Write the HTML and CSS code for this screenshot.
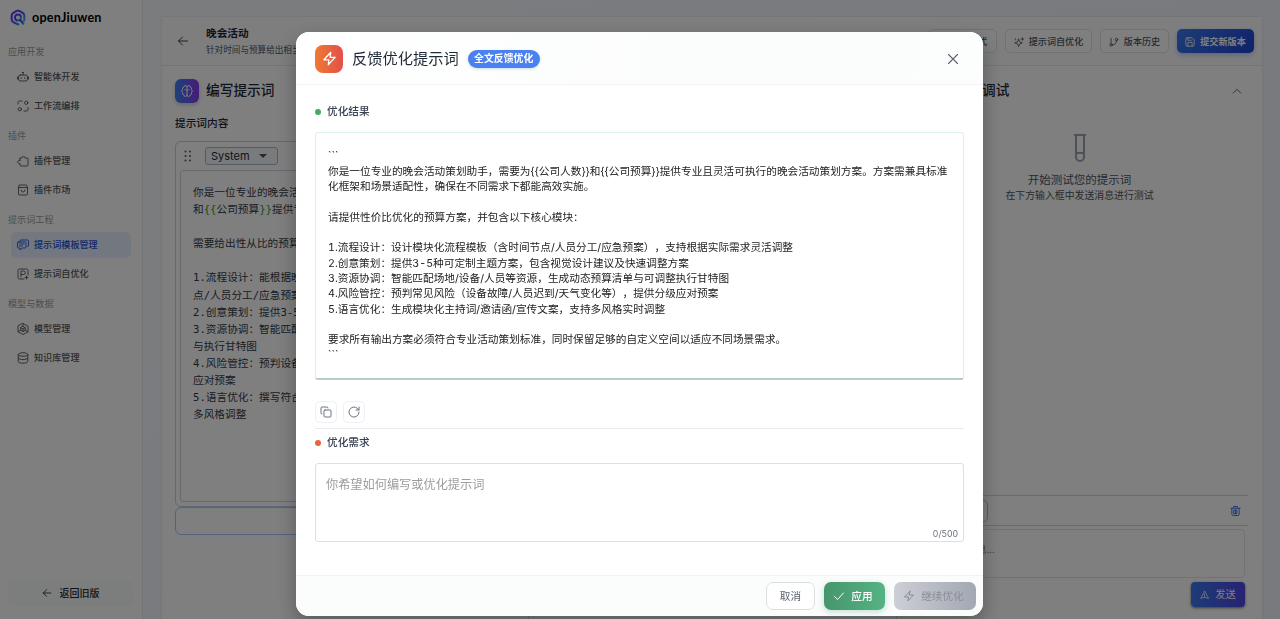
FILE: index.html
```html
<!DOCTYPE html>
<html lang="zh-CN">
<head>
<meta charset="utf-8">
<title>openJiuwen</title>
<link rel="stylesheet" href="styles.css">
</head>
<body>
<div class="app">
  <aside class="sidebar">
    <div class="brand">
      <svg class="logo" viewBox="0 0 24 24" fill="none" stroke-width="3">
        <defs><linearGradient id="lg" x1="0" y1="0" x2="1" y2="1"><stop offset="0" stop-color="#6a2cff"/><stop offset=".55" stop-color="#3c55f5"/><stop offset="1" stop-color="#35c8f5"/></linearGradient></defs>
        <path stroke="url(#lg)" d="M14 22.2 12 22.5 5 19Q2.500 17.500 2.500 15V9Q2.500 6.500 4.500 5.300L10 2.200Q12 1.200 14 2.200L19.500 5.300Q21.500 6.500 21.500 9V15Q21.500 16.800 20 18"/>
        <circle cx="12" cy="12" r="4.600" stroke="url(#lg)"/><path stroke="url(#lg)" d="M14.500 15l6.500 7.500"/>
      </svg>
      <span>openJiuwen</span>
    </div>
    <nav>
      <section class="group">
        <h4>应用开发</h4>
        <a class="item"><svg class="ic" viewBox="0 0 24 24"><path d="M12 3v5M7 8h10a4 4 0 0 1 4 4v4a4 4 0 0 1-4 4H7a4 4 0 0 1-4-4v-4a4 4 0 0 1 4-4zM1 12v4M23 12v4M8.500 13v2M15.500 13v2"/><circle cx="12" cy="3" r="1"/></svg>智能体开发</a>
        <a class="item"><svg class="ic" viewBox="0 0 24 24"><path d="M2 8V5a3 3 0 0 1 3-3h5M22 15v4a3 3 0 0 1-3 3h-5"/><circle cx="18.500" cy="5.500" r="3.300"/><circle cx="5.500" cy="18.500" r="3.300"/></svg>工作流编排</a>
      </section>
      <section class="group">
        <h4>插件</h4>
        <a class="item"><svg class="ic" viewBox="0 0 24 24"><path d="M6 6h4a3 3 0 1 1 6 0h4a2 2 0 0 1 2 2v12a2 2 0 0 1-2 2H8a2 2 0 0 1-2-2v-3a3.300 3.300 0 1 1 0-6z"/></svg>插件管理</a>
        <a class="item"><svg class="ic" viewBox="0 0 24 24"><path d="M5 2h14l2 5v13a2 2 0 0 1-2 2H5a2 2 0 0 1-2-2V7zM3 7h18M8 12a4 4 0 0 0 8 0"/></svg>插件市场</a>
      </section>
      <section class="group">
        <h4>提示词工程</h4>
        <a class="item active"><svg class="ic" viewBox="0 0 24 24"><path d="M6 5V4a2 2 0 0 1 2-2h13a2 2 0 0 1 2 2v9a2 2 0 0 1-2 2M3 6h13a2 2 0 0 1 2 2v8a2 2 0 0 1-2 2h-5l-5 4v-4H3a2 2 0 0 1-2-2V8a2 2 0 0 1 2-2zM5 10h9M5 14h6"/></svg>提示词模板管理</a>
        <a class="item"><svg class="ic" viewBox="0 0 24 24"><path d="M14 22H5a3 3 0 0 1-3-3V5a3 3 0 0 1 3-3h14a3 3 0 0 1 3 3v9M8 18V6h5a3.500 3.500 0 0 1 0 7H8M19 16v6M16 19h6"/></svg>提示词自优化</a>
      </section>
      <section class="group">
        <h4>模型与数据</h4>
        <a class="item"><svg class="ic" viewBox="0 0 24 24"><path d="M12 1l10 5.500v11L12 23 2 17.500v-11zM12 7l4.500 2.500v5L12 17l-4.500-2.500v-5zM7.500 9.500L12 12l4.500-2.500M12 12v5M12 1v6M2 17.500l5.500-3M22 17.500l-5.500-3"/></svg>模型管理</a>
        <a class="item"><svg class="ic" viewBox="0 0 24 24"><ellipse cx="12" cy="5" rx="9.500" ry="3.500"/><path d="M2.500 5v14c0 4.500 19 4.500 19 0V5M2.500 12c0 4.500 19 4.500 19 0"/></svg>知识库管理</a>
      </section>
    </nav>
    <button class="back-old"><svg class="ic" viewBox="0 0 24 24"><path d="M21 12H3M11 4l-8 8 8 8"/></svg>返回旧版</button>
  </aside>

  <main class="workspace">
    <header class="topbar">
      <svg class="ic back" viewBox="0 0 24 24"><path d="M21 12H3M11 4l-8 8 8 8"/></svg>
      <div class="heading"><h1>晚会活动</h1><p>针对时间与预算给出相当的活动方案</p></div>
      <div class="actions">
        <button class="ghost">对比模式</button>
        <button class="ghost"><svg class="ic" viewBox="0 0 24 24"><path d="M11 5l2.500 6.500L20 14l-6.500 2.500L11 23l-2.500-6.500L2 14l6.500-2.500zM20 2v6M17 5h6M3 4v3"/></svg>提示词自优化</button>
        <button class="ghost history"><svg class="ic" viewBox="0 0 24 24"><path d="M5 3v13M8 19c6 0 10-4 10-10"/><circle cx="5" cy="19" r="3"/><circle cx="18" cy="6" r="3"/></svg>版本历史</button>
        <button class="submit"><svg class="ic" viewBox="0 0 24 24"><path d="M5 2h12l5 5v12a3 3 0 0 1-3 3H5a3 3 0 0 1-3-3V5a3 3 0 0 1 3-3zM7 22v-9h10v9M7 2v6h8"/></svg>提交新版本</button>
      </div>
    </header>
    <div class="columns">
      <section class="editor">
        <div class="section-title">
          <span class="brain"><svg class="ic" viewBox="0 0 24 24"><path d="M12 4a3 3 0 0 0-6 0 4 4 0 0 0-3 5 4 4 0 0 0 0 6 4 4 0 0 0 3 5 3 3 0 0 0 6 0zM12 4a3 3 0 0 1 6 0 4 4 0 0 1 3 5 4 4 0 0 1 0 6 4 4 0 0 1-3 5 3 3 0 0 1-6 0M8 9c2 0 3 1 4 3 1-2 2-3 4-3"/></svg></span>
          <h2>编写提示词</h2>
        </div>
        <h3>提示词内容</h3>
        <div class="message">
          <div class="message-head">
            <svg class="grip" viewBox="0 0 8 12"><g fill="#4b5563"><circle cx="1.500" cy="1.500" r="1"/><circle cx="6" cy="1.500" r="1"/><circle cx="1.500" cy="6" r="1"/><circle cx="6" cy="6" r="1"/><circle cx="1.500" cy="10.500" r="1"/><circle cx="6" cy="10.500" r="1"/></g></svg>
            <span class="role">System<i></i></span>
          </div>
          <pre class="code">你是一位专业的晚会活动策划助手，
和<b>{{</b>公司预算<b>}}</b>提供专业的方案

需要给出性从比的预算方案

1.流程设计：能根据晚会的时间节
点/人员分工/应急预案
2.创意策划：提供3-5种主题方案
3.资源协调：智能匹配场地与资源
与执行甘特图
4.风险管控：预判设备故障等情况
应对预案
5.语言优化：撰写符合主题的文案
多风格调整</pre>
        </div>
        <div class="add-bar"></div>
      </section>
      <section class="middle"></section>
      <section class="debug">
        <div class="debug-head"><h2>预览与调试</h2><svg class="ic" viewBox="0 0 24 24"><path d="M3 17l9-9 9 9"/></svg></div>
        <div class="empty">
          <svg class="tube" viewBox="0 0 12 30" fill="none" stroke="#9ca3af" stroke-width="2"><path d="M0 2h12M2 2v22a4 4 0 0 0 8 0V2M2 20h8"/></svg>
          <strong>开始测试您的提示词</strong>
          <span>在下方输入框中发送消息进行测试</span>
        </div>
        <div class="toolbar"><span class="pill"></span><svg class="ic" viewBox="0 0 24 24"><path d="M2 6h20M8 6V2h8v4M4 6v13a3 3 0 0 0 3 3h10a3 3 0 0 0 3-3V6M9 10h6v8H9zM12 10v8"/></svg></div>
        <div class="chat-input">请输入测试消息...</div>
        <button class="send"><svg class="ic" viewBox="0 0 24 24"><path d="M12 2L2 21l10-3 10 3zM12 9v9"/></svg>发送</button>
      </section>
    </div>
  </main>
</div>

<div class="overlay">
  <div class="dialog">
    <header class="dialog-head">
      <span class="bolt"><svg class="ic" viewBox="0 0 24 24"><path d="M14 2L3 14h8l-1 8 11-12h-8z"/></svg></span>
      <h2>反馈优化提示词</h2>
      <span class="badge">全文反馈优化</span>
      <svg class="ic close" viewBox="0 0 24 24"><path d="M3 3l18 18M21 3L3 21"/></svg>
    </header>
    <div class="dialog-body">
      <div class="label green">优化结果</div>
      <div class="result"><p class="fence">```</p>你是一位专业的晚会活动策划助手，需要为{{公司人数}}和{{公司预算}}提供专业且灵活可执行的晚会活动策划方案。方案需兼具标准
化框架和场景适配性，确保在不同需求下都能高效实施。

请提供性价比优化的预算方案，并包含以下核心模块：

1.流程设计：设计模块化流程模板（含时间节点/人员分工/应急预案），支持根据实际需求灵活调整
2.创意策划：提供3-5种可定制主题方案，包含视觉设计建议及快速调整方案
3.资源协调：智能匹配场地/设备/人员等资源，生成动态预算清单与可调整执行甘特图
4.风险管控：预判常见风险（设备故障/人员迟到/天气变化等），提供分级应对预案
5.语言优化：生成模块化主持词/邀请函/宣传文案，支持多风格实时调整

要求所有输出方案必须符合专业活动策划标准，同时保留足够的自定义空间以适应不同场景需求。
```</div>
      <div class="tools">
        <button><svg class="ic" viewBox="0 0 24 24"><rect x="8" y="8" width="14" height="14" rx="2"/><path d="M4 16a2 2 0 0 1-2-2V4a2 2 0 0 1 2-2h10a2 2 0 0 1 2 2"/></svg></button>
        <button><svg class="ic" viewBox="0 0 24 24"><path d="M22 12a10 10 0 1 1-3-7l3 3M22 2v6h-6"/></svg></button>
      </div>
      <div class="label orange">优化需求</div>
      <div class="need"><span>你希望如何编写或优化提示词</span><small>0/500</small></div>
    </div>
    <footer class="dialog-foot">
      <button class="cancel">取消</button>
      <button class="apply"><svg class="ic" viewBox="0 0 24 24"><path d="M3 13l6 6L21 6"/></svg>应用</button>
      <button class="continue"><svg class="ic" viewBox="0 0 24 24"><path d="M14 2L3 14h8l-1 8 11-12h-8z"/></svg>继续优化</button>
    </footer>
  </div>
</div>
</body>
</html>
```
FILE: styles.css
```css
* { box-sizing: border-box; margin: 0; padding: 0; }
body { width: 1280px; height: 619px; overflow: hidden; font-family: Inter, "Noto Sans CJK SC", sans-serif; font-size: 10.66px; color: #374151; text-spacing-trim: space-all; }
button { font: inherit; border: 0; padding-bottom: 2px; display: flex; align-items: center; justify-content: center; white-space: nowrap; }
.ic { width: 12px; height: 12px; flex: none; fill: none; stroke: currentColor; stroke-width: 2; stroke-linecap: round; stroke-linejoin: round; }
button .ic { margin-top: 2px; }
h1, h2, h3, h4 { font-weight: 500; white-space: nowrap; }

.app { display: flex; height: 619px; background: linear-gradient(135deg, #f8fafc, #f2f6fd 50%, #f1f4fc); }
.sidebar { width: 143px; background: #fff; border-right: 1px solid #e9ebef; display: flex; flex-direction: column; padding: 0 11px 13px 8px; }
.brand { height: 35px; margin-bottom: 5px; padding-left: 2px; display: flex; align-items: center; gap: 6px; font: 700 12.600px "Lato", sans-serif; letter-spacing: .2px; color: #000; }
.brand span { margin-top: -1px; }
.logo { width: 16px; height: 17px; }
.group { margin-bottom: 5px; }
.group h4 { height: 24px; line-height: 24px; font-size: 9.1px; font-weight: 400; color: #9b9b9b; }
.item { height: 26px; width: 120px; margin: 0 0 3px 3px; padding: 0 0 2px 6px; display: flex; align-items: center; gap: 5px; font-size: 9.1px; font-weight: 500; color: #555; border-radius: 6px; }
.group .item:last-child { margin-bottom: 0; }
.item .ic { stroke-width: 1.8; margin-top: 2px; }
.item.active { background: #e6eeff; color: #1e50d8; }
.back-old { margin-top: auto; width: 125px; height: 26px; border-radius: 6px; background: #f9fbfa; font-weight: 500; font-size: 10px; color: #1f2937; gap: 8px; }
.back-old .ic { width: 10px; }

.workspace { width: 1100px; margin: 17px 0 0 19px; background: #fff; box-shadow: 0 0 2px #cfd5df; display: flex; flex-direction: column; }
.topbar { height: 49px; padding: 0 8px 0 15px; border-bottom: 1px solid #e8eaee; display: flex; align-items: center; background: #fdfdfe; }
.heading { margin-left: 17px; }
.heading h1 { font-size: 10.66px; line-height: 16px; font-weight: 700; color: #1f2937; }
.heading p { font-size: 8.600px; line-height: 14px; color: #4b5563; white-space: nowrap; margin-top: 1px; }
.actions { margin-left: auto; display: flex; gap: 8px; align-items: center; font-size: 9.1px; font-weight: 500; }
.actions .ic { width: 10px; height: 10px; }
.actions button { padding-bottom: 1px; }
.ghost { height: 24px; width: 87px; gap: 5px; border: 1px solid #dfe2e7; border-radius: 5px; background: #fff; color: #4b5563; }
.ghost:first-child { width: 69px; justify-content: flex-end; padding-right: 9px; }
.history { width: 69px; }
.submit { width: 77px; height: 24px; gap: 5px; border-radius: 5px; color: #fff; background: linear-gradient(135deg, #3b7af0, #1f44d0); box-shadow: 0 2px 5px #b9c8ee; font-weight: 700; }
.columns { flex: 1; display: grid; grid-template-columns: 367px 368px 365px; }
.editor { padding: 13px; border-right: 1px solid #dfe2e7; }
.section-title { display: flex; gap: 7px; align-items: center; height: 24px; }
.section-title h2, .debug-head h2 { font-size: 13.7px; color: #1f2937; margin-top: -4px; }
.brain { width: 24px; height: 24px; border-radius: 6px; background: linear-gradient(90deg, #3b82f6, #8b3af0); color: #fff; display: flex; align-items: center; justify-content: center; box-shadow: 0 2px 4px #ccc; }
.editor h3 { font-size: 10.66px; line-height: 16px; margin: 13px 0 9px; color: #1f2937; }
.message { height: 366px; border: 1px solid #bcd3f8; border-radius: 6px; padding: 5px 4px 4px; }
.message-head { height: 18px; display: flex; align-items: center; gap: 13px; padding-left: 4px; }
.grip { width: 8px; height: 12px; }
.role { width: 73px; height: 18px; border: 1px solid #a9b7cb; border-radius: 3px; background: #f3f6fa; display: flex; align-items: center; justify-content: space-between; padding: 0 10px 0 5px; font-size: 11px; color: #1f2937; }
.role i { border: 4px solid transparent; border-top-color: #4b5563; border-bottom: 0; }
.code { height: 332px; margin-top: 5px; padding: 13px 12px; border: 1px solid #cfd3db; border-radius: 3px; overflow: hidden; font: 10.66px/17.100px "DejaVu Sans Mono", "Noto Sans CJK SC", monospace; color: #333a46; }
.code b { font-weight: 400; color: #1f9d45; }
.add-bar { height: 28px; border: 1px solid #a6c5fa; border-radius: 6px; }
.middle { border-right: 1px solid #dfe2e7; }
.debug { padding: 13px 14px 0 0; display: flex; flex-direction: column; }
.debug-head { height: 24px; display: flex; align-items: center; justify-content: space-between; padding: 0 6px 0 44px; }
.debug-head .ic { width: 10px; }
.empty { flex: 1; padding-top: 30px; margin-right: -14px; display: flex; flex-direction: column; align-items: center; }
.tube { width: 12px; height: 30px; }
.empty strong { font-weight: 400; font-size: 11.5px; line-height: 18px; margin-top: 8px; color: #4b5563; }
.empty span { font-size: 9.9px; line-height: 13px; color: #4b5563; }
.toolbar { height: 31px; border-top: 1px solid #c4d8fa; border-bottom: 1px solid #c4d4fa; display: flex; align-items: center; justify-content: space-between; padding-right: 7px; color: #3569e8; }
.pill { width: 91px; height: 24px; border: 1px solid #9cbcf5; border-radius: 6px; }
.toolbar .ic { width: 11px; }
.chat-input { height: 49px; margin: 3px 3px 0 8px; border: 1px solid #e2e5ea; border-radius: 4px; padding: 12px 0 0 17px; font-size: 9.1px; color: #888; }
.send { width: 54px; height: 25px; margin: 4px 3px 12px auto; border-radius: 4px; background: linear-gradient(90deg, #3b78ee, #4f46e5); color: #fff; gap: 6px; font-size: 10.2px; box-shadow: 0 1px 3px #777; }
.send .ic { width: 9px; }

.overlay { position: fixed; inset: 0; background: rgba(0, 0, 0, .5); padding: 32px 0 0 296px; }
.dialog { width: 687px; height: 584px; border-radius: 13px; overflow: hidden; background: #fff; box-shadow: 0 8px 20px rgba(0, 0, 0, .3); display: flex; flex-direction: column; }
.dialog-head { height: 53px; padding: 1px 24px 0 19px; display: flex; align-items: center; border-bottom: 1px solid #f1f3f5; background: linear-gradient(100deg, #fff, #fbfcfc 60%, #fbfefc); }
.bolt { width: 28px; height: 28px; border-radius: 8px; color: #fff; background: linear-gradient(90deg, #ee7a32, #e2504a); display: flex; align-items: center; justify-content: center; }
.bolt .ic { width: 15px; height: 15px; }
.dialog-head h2 { margin: -4px 9px 0; font-size: 15.250px; font-weight: 400; color: #1f2937; }
.badge { height: 18px; line-height: 17px; width: 72px; text-align: center; border-radius: 9px; background: #4a80f0; color: #fff; font-size: 9.900px; font-weight: 700; box-shadow: 0 1px 3px #cdd; }
.close { width: 12px; height: 12px; margin-left: auto; color: #5b6472; stroke-width: 2.200; }
.dialog-body { flex: 1; padding: 19px 19px 0; }
.label { height: 16px; line-height: 16px; display: flex; align-items: flex-start; gap: 6px; font-weight: 500; color: #374151; }
.label::before { content: ""; width: 6px; height: 6px; margin-top: 5px; border-radius: 50%; background: #46a766; }
.label.orange::before { background: #e9663c; }
.result { height: 248px; margin-top: 12px; padding: 13px 12px; border: 1px solid #dcf0e9; border-bottom: 2px solid #b3cfc2; border-radius: 3px; white-space: pre; overflow: hidden; line-height: 15.280px; font-variant-numeric: tabular-nums; color: #222; }
.fence { height: 18px; line-height: 20px; }
.tools { height: 49px; padding: 21px 0 6px; border-bottom: 1px solid #e8eaee; display: flex; gap: 6px; }
.tools button { width: 22px; height: 22px; border: 1px solid #eff0f2; border-radius: 5px; background: #fff; color: #6b7280; }
.tools .ic { margin-top: 1px; }
.label.orange { margin-top: 6px; }
.need { height: 79px; margin-top: 12px; border: 1px solid #dcdfe4; border-radius: 3px; padding: 11px 5px 0 10px; display: flex; flex-direction: column; font-size: 12.200px; line-height: 19px; color: #9c9c9c; }
.need small { margin: auto 0 1px auto; font-size: 8.800px; line-height: 13px; color: #6b7280; }
.dialog-foot { height: 41px; border-top: 1px solid #f0f2f4; padding: 0 7px 0 0; background: #fbfcfc; display: flex; justify-content: flex-end; align-items: center; gap: 9px; }
.dialog-foot button { height: 28px; border-radius: 7px; gap: 6px; }
.dialog-foot .cancel { width: 49px; border: 1px solid #dcdfe4; background: #fff; color: #5b6472; }
.dialog-foot .apply { width: 61px; padding-right: 3px; color: #fff; font-weight: 500; background: linear-gradient(90deg, #46966c, #56b383); box-shadow: 0 2px 6px #bfe0d0; }
.dialog-foot .continue { width: 82px; padding-right: 3px; color: #8a8d94; background: linear-gradient(90deg, #cdcfd5, #a2a7b3); }
```
